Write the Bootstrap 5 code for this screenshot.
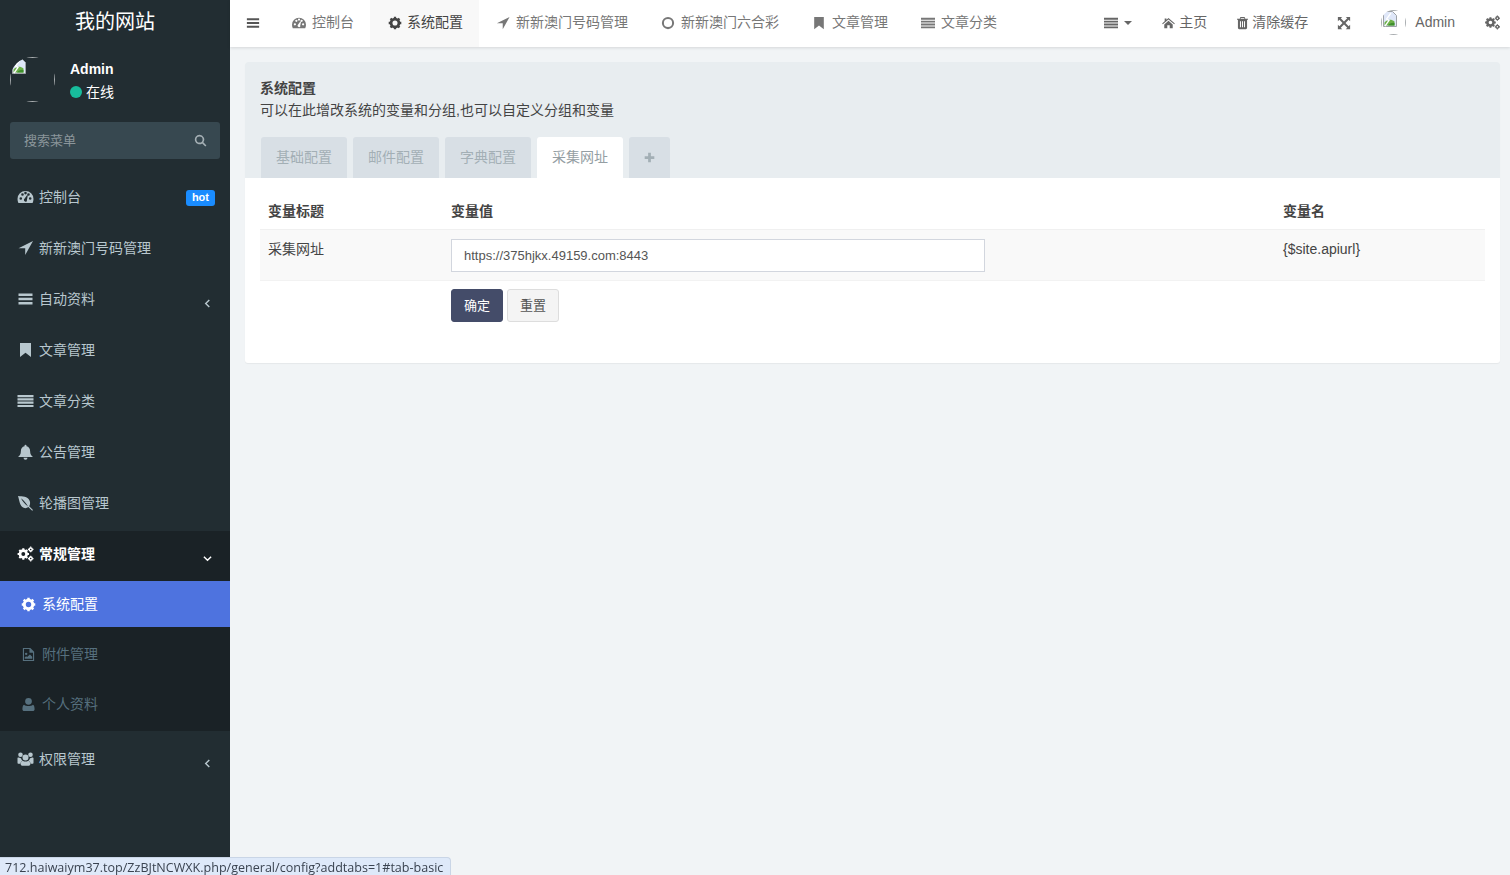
<!DOCTYPE html>
<html lang="zh-CN">
<head>
  <meta charset="UTF-8" />
  <meta name="viewport" content="width=device-width, initial-scale=1.0"/>
  <title>系统配置</title>
  <link href="https://cdn.jsdelivr.net/npm/bootstrap@5.3.2/dist/css/bootstrap.min.css" rel="stylesheet"/>
  <style>
    html, body { height: 100%; overflow: hidden; }
    body {
      background: #f1f4f6;
      color: #444c55;
      font-family: "Liberation Sans", "Noto Sans CJK SC", sans-serif;
      font-size: 14px;
    }
    .ico { width: 14px; height: 14px; fill: currentColor; flex: none; }

    /* sidebar */
    .side-wrap { width: 230px; height: 875px; background: #222d32; flex: none; }
    .side-logo { height: 44px; font-size: 20px; line-height: 44px; color: #fff; text-align: center; }
    .side-user { height: 78px; padding: 13px 10px 0; color: #fff; }
    .side-user-name { font-weight: 700; line-height: 22px; margin-top: 1px; }
    .side-user-state { line-height: 22px; margin-top: 1px; }
    .state-dot { width: 12px; height: 12px; border-radius: 50%; background: #18bc9c; }
    .broken-pic { display: block; position: relative; border-radius: 50%; overflow: hidden; flex: none; }
    .broken-pic::before { content: ""; position: absolute; inset: 0; border: 1px solid #a9adb0; }
    .broken-pic svg { position: absolute; left: 1px; top: 1px; width: 16px; height: 16px; }
    .pic-lg { width: 45px; height: 45px; margin-right: 15px; }
    .pic-sm { width: 25px; height: 25px; margin-right: 9px; }
    .side-search { height: 37px; margin: 0 10px 15px; padding: 0 14px; background: #374850; border-radius: 3px; color: #8b969b; font-size: 13px; }
    .side-search .ico { color: #a4afb4; width: 13px; height: 13px; margin-right: -1px; }
    .side-item { height: 51px; padding: 13px 15px 0 17px; color: #b8c7ce; line-height: 20px; }
    .side-item .ico { margin: 2px 5px 0 0; width: 17px; height: 16px; }
    .side-item .arrow-l { margin: 10px 3px 0 auto; width: 9px; height: 9px; fill: none; stroke: currentColor; stroke-width: 1.6; }
    .side-hot { margin-left: auto; background: #1a8cff; color: #fff; font-size: 11px; font-weight: 700; line-height: 15px; padding: 0 6px; border-radius: 3px; margin-top: 3px; height: 16px; }
    .side-group { background: #1a2226; height: 200px; }
    .side-group .side-item { color: #fff; height: 50px; }
    .side-last { padding-top: 18px; }
    .side-sub { height: 46px; margin-bottom: 4px; padding-left: 21px; color: #56707e; }
    .side-sub .ico { margin-right: 6px; width: 15px; height: 15px; }
    .side-sub-on { background: #4e73df; color: #fff; }

    /* top bar */
    .top-bar { height: 47px; background: #fff; box-shadow: 0 1px 3px rgba(0, 0, 0, .12); color: #777; position: relative; }
    .top-link { height: 47px; padding: 0 16px 2px 17px; white-space: nowrap; color: inherit; text-decoration: none; }
    .top-link .ico { margin-right: 6px; }
    .top-link-on { background: #f8f8f8; color: #444; padding: 0 16px 2px 18px; }
    .top-link-on .ico { margin-right: 5px; }
    .top-burger { width: 45px; justify-content: center; padding: 0 0 2px; color: #555; }
    .top-burger .ico { margin: 0; }
    .top-right { padding: 0 15px 2px; color: #666; }
    .top-right .ico { margin: 0; }
    .top-right .ico-gap { margin-right: 4px; }
    .top-right .ico-home { width: 13px; }
    .top-right .ico-trash { width: 11px; }
    .top-right .ico-cogs { width: 15px; height: 15px; }
    .top-expand { padding-left: 14px; }
    .top-end { padding-right: 10px; }
    .caret-mini { width: 0; height: 0; border: 4px solid transparent; border-top-color: #666; border-bottom: 0; margin-left: 6px; }

    /* panel */
    .page-body { padding: 15px 10px 0 15px; }
    .cfg-panel { background: #fff; border-radius: 3px; height: 301px; box-shadow: 0 1px 1px rgba(0, 0, 0, .05); overflow: hidden; }
    .cfg-head { background: #e8edf0; height: 116px; padding: 15px 15px 0; color: #444; line-height: 22px; }
    .cfg-title { font-weight: 700; }
    .cfg-tabs { gap: 6px; margin: 16px 0 0 1px; }
    .cfg-tab { height: 41px; padding: 0 15px; background: #d8dfe5; color: #a3afb5; border-radius: 3px 3px 0 0; line-height: 41px; text-decoration: none; }
    .cfg-tab-on { background: #fff; color: #949ea3; }
    .cfg-tab .ico { width: 11px; height: 11px; fill: #a3afb5; }
    .cfg-tab-add { width: 41px; padding: 0; }
    .cfg-body { padding: 15px 15px 0; }
    .cfg-grid { table-layout: fixed; width: 1225px; margin: 0; color: #444; }
    .cfg-grid th, .cfg-grid td { padding: 8px; border: 0; line-height: 20px; background: transparent; box-shadow: none; }
    .cfg-grid th { border-bottom: 1px solid #f0f0f0; }
    .cfg-c1 { width: 183px; }
    .cfg-c2 { width: 832px; }
    .cfg-c3 { width: 210px; }
    .cfg-row td { background: #f9f9f9; height: 51px; border-bottom: 1px solid #f2f2f2; padding-top: 9px; }
    .cfg-input { width: 534px; height: 33px; border: 1px solid #d2d6de; border-radius: 0; padding: 6px 12px; font-size: 13px; color: #555; line-height: 20px; }
    .cfg-ok, .cfg-reset { height: 33px; width: 52px; padding: 0; font-size: 13px; border-radius: 3px; line-height: 31px; }
    .cfg-ok { background: #444c69; border: 1px solid #444c69; color: #fff; }
    .cfg-reset { background: #f4f4f4; border: 1px solid #ddd; color: #555; }

    .url-tip {
      position: fixed; left: 0; bottom: 0; height: 18px; width: 451px; padding-left: 5px;
      background: #dee9f9; border: 1px solid #c9d5e6; border-width: 1px 1px 0 0; border-radius: 0 4px 0 0;
      font-family: "Open Sans", sans-serif; font-size: 12.550px; line-height: 19px; color: #3a4350; white-space: nowrap;
    }
  </style>
</head>
<body>
  <!-- icon set -->
  <svg width="0" height="0" class="position-absolute">
    <symbol id="i-dash" viewBox="0 0 16 16"><path fill-rule="evenodd" d="M8 2a8 8 0 0 0-8 8c0 1.500.3 2.800.9 4h14.200c.6-1.200.9-2.500.9-4a8 8 0 0 0-8-8zM3.300 10.800a1.300 1.300 0 1 1 0-2.600 1.300 1.300 0 0 1 0 2.600zM5 6.800a1.300 1.300 0 1 1 0-2.600 1.300 1.300 0 0 1 0 2.600zm3-1.400a1.300 1.300 0 1 1 0-2.600 1.300 1.300 0 0 1 0 2.600zM9.600 12a1.800 1.800 0 0 1-3.200-1.400L9.500 6.200l.8.300-1 5zM11 6.800a1.300 1.300 0 1 1 0-2.600 1.300 1.300 0 0 1 0 2.600zm1.700 4a1.300 1.300 0 1 1 0-2.600 1.300 1.300 0 0 1 0 2.600z"/></symbol>
    <symbol id="i-arrow" viewBox="0 0 16 16"><path d="M15.500 1 1 8.300h6.700V15z"/></symbol>
    <symbol id="i-bars" viewBox="0 0 16 16"><path d="M1 2.500h14v2.400H1zM1 6.800h14v2.400H1zM1 11.100h14v2.400H1z"/></symbol>
    <symbol id="i-book" viewBox="0 0 16 16"><path d="M2.500 1h11v14L8 10.800 2.500 15z"/></symbol>
    <symbol id="i-list" viewBox="0 0 16 16"><path d="M0 2h16v2.200H0zM0 5.300h16v2.200H0zM0 8.600h16v2.200H0zM0 11.900h16v2.200H0z"/></symbol>
    <symbol id="i-bell" viewBox="0 0 16 16"><path d="M8 .8a1 1 0 0 1 1 1v.5c2.300.5 3.600 2.400 3.600 4.700 0 3.500 1.300 4.800 2.900 6H.5c1.600-1.200 2.900-2.500 2.900-6 0-2.300 1.300-4.200 3.600-4.700v-.5a1 1 0 0 1 1-1zM6 13.700h4a2 2 0 0 1-4 0z"/></symbol>
    <symbol id="i-leaf" viewBox="0 0 16 16"><path fill-rule="evenodd" d="M.5 1c4.500.5 9.500.3 11.500 4.500 1 2 .7 4.200-.3 5.800l3.800 3.700-.8.800-3.800-3.700C9 13.500 6.500 13.500 4.800 12 2 9.500 1.800 5 .5 1zm3 2.300c1.500 3 3.700 5.500 7 8.200-2-3.300-4-5.800-7-8.200z"/></symbol>
    <symbol id="i-cog" viewBox="0 0 16 16"><circle cx="8" cy="8" r="4.500" fill="none" stroke="currentColor" stroke-width="3.200"/><path stroke="currentColor" stroke-width="2.600" d="M8 .8v3M8 12.200v3M.8 8h3M12.200 8h3M2.900 2.900l2.100 2.100M11 11l2.100 2.100M2.900 13.100 5 11M11 5l2.100-2.100"/></symbol>
    <symbol id="i-cogs" viewBox="0 0 16 16"><circle cx="5.800" cy="8" r="3.300" fill="none" stroke="currentColor" stroke-width="2.700"/><path stroke="currentColor" stroke-width="2.100" d="M5.800 2.300v2.500M5.800 11.200v2.500M.1 8h2.500M9 8h2.500M1.800 4l1.800 1.800M8 10.200 9.800 12M1.800 12l1.800-1.800M8 5.800 9.800 4"/><circle cx="13.200" cy="3.400" r="1.500" fill="none" stroke="currentColor" stroke-width="1.500"/><path stroke="currentColor" stroke-width="1.200" d="M13.200.6v1.200M13.200 5v1.200M10.400 3.400h1.200M14.800 3.400H16"/><circle cx="13.200" cy="12.600" r="1.500" fill="none" stroke="currentColor" stroke-width="1.500"/><path stroke="currentColor" stroke-width="1.200" d="M13.200 9.800V11M13.200 14.200v1.200M10.400 12.600h1.200M14.800 12.600H16"/></symbol>
    <symbol id="i-file" viewBox="0 0 16 16"><path fill-rule="evenodd" d="M2 1h8l4 4v10H2zm1.200 1.200v11.600h9.600V6H9V2.200zM5.500 6a1.300 1.300 0 1 1 0 2.600A1.300 1.300 0 0 1 5.500 6zM4 12.500v-1.500l1.500-1.200 1 .8L9.500 8l2.500 2.300v2.200z"/></symbol>
    <symbol id="i-user" viewBox="0 0 16 16"><path d="M8 1a3.600 3.600 0 1 1 0 7.200A3.600 3.600 0 0 1 8 1zM3.300 8.200c1.200 1.100 2.900 1.500 4.700 1.500s3.500-.4 4.700-1.500c1.300.6 1.800 2.400 1.800 4.800 0 1.200-.8 2-1.900 2H3.400c-1.100 0-1.900-.8-1.900-2 0-2.400.5-4.200 1.800-4.800z"/></symbol>
    <symbol id="i-users" viewBox="0 0 16 16"><path d="M8 3.500a3 3 0 1 1 0 6 3 3 0 0 1 0-6zM3 1.500a2.300 2.300 0 1 1 0 4.600 2.300 2.300 0 0 1 0-4.600zm10 0a2.300 2.300 0 1 1 0 4.600 2.300 2.300 0 0 1 0-4.600zM0 7c0-.4 1-.6 1.500-.5.500.5 1.200.8 2 .8.300 1.100.8 2 1.500 2.500-1.200.4-1.900 1.500-2.100 2.900H1c-.7 0-1-.5-1-1.300zm16 0c0-.4-1-.6-1.500-.5-.5.5-1.200.8-2 .8-.3 1.100-.8 2-1.500 2.500 1.200.4 1.900 1.500 2.100 2.900H15c.7 0 1-.5 1-1.300zM5.300 9.700c.7.600 1.700.9 2.700.9s2-.3 2.700-.9c1.400.3 2.100 1.800 2.100 3.600 0 .9-.6 1.400-1.500 1.400H4.700c-.9 0-1.500-.5-1.500-1.400 0-1.800.7-3.300 2.100-3.600z"/></symbol>
    <symbol id="i-home" viewBox="0 0 16 16"><path d="M8 1.800 15.800 8.500l-.8 1L8 3.600 1 9.500l-.8-1L3.300 5.800V2.500h2.200v1.400zM2.800 9.800 8 5.300l5.200 4.500V14.500H9.500v-3.700h-3v3.700H2.800z"/></symbol>
    <symbol id="i-trash" viewBox="0 0 13 16"><path fill-rule="evenodd" d="M4 1h5l.8 2h3.200v1.300h-1.100V14a1.400 1.400 0 0 1-1.400 1.300H2.500A1.400 1.400 0 0 1 1.100 14V4.300H0V3h3.200zm.5 1.100L4.300 3h4.400l-.2-.9zM3.500 6v7h1.200V6zm2.400 0v7h1.200V6zm2.400 0v7h1.200V6z"/></symbol>
    <symbol id="i-expand" viewBox="0 0 16 16"><path d="M1 1h5L4.300 2.700 8 6.300l3.700-3.600L10 1h5v5l-1.700-1.700L9.700 8l3.600 3.700L15 10v5h-5l1.700-1.700L8 9.700l-3.700 3.600L6 15H1v-5l1.700 1.700L6.300 8 2.700 4.300 1 6z"/></symbol>
    <symbol id="i-ring" viewBox="0 0 16 16"><path fill-rule="evenodd" d="M8 1a7 7 0 1 1 0 14A7 7 0 0 1 8 1zm0 2.300a4.700 4.700 0 1 0 0 9.400 4.700 4.700 0 0 0 0-9.400z"/></symbol>
    <symbol id="i-search" viewBox="0 0 16 16"><path fill-rule="evenodd" d="M6.800 1a5.800 5.800 0 0 1 4.700 9.200l3.800 3.800-1.400 1.400-3.800-3.800A5.800 5.800 0 1 1 6.800 1zm0 2a3.800 3.800 0 1 0 0 7.600 3.800 3.800 0 0 0 0-7.600z"/></symbol>
    <symbol id="i-plus" viewBox="0 0 16 16"><path d="M6 1h4v5h5v4h-5v5H6v-5H1V6h5z"/></symbol>
    <symbol id="i-broken" viewBox="0 0 16 16"><path d="M1.500.5h9l4 4v11h-13z" fill="#dfe7f8" stroke="#9ea2a6"/><path d="M2.500 14.500v-3c3-3.500 7-3.500 10-1v4z" fill="#6db048"/><path d="M6 14.500c1.500-2 4-3 6.500-2.500v2.500z" fill="#3f8f2c"/><path d="M9 2 4.500 8 7 9.500 3 15" fill="none" stroke="#fff" stroke-width="1.300"/></symbol>
    <symbol id="i-left" viewBox="0 0 10 10"><path d="M7 1 3 5l4 4"/></symbol>
    <symbol id="i-down" viewBox="0 0 10 10"><path d="M1 3l4 4 4-4"/></symbol>
  </svg>

  <div class="d-flex">
    <!-- sidebar -->
    <aside class="side-wrap">
      <div class="side-logo">我的网站</div>
      <div class="side-user d-flex">
        <span class="broken-pic pic-lg"><svg><use href="#i-broken"/></svg></span>
        <div>
          <div class="side-user-name">Admin</div>
          <div class="side-user-state d-flex align-items-center gap-1"><span class="state-dot"></span>在线</div>
        </div>
      </div>
      <div class="side-search d-flex align-items-center justify-content-between">
        <span>搜索菜单</span>
        <svg class="ico"><use href="#i-search"/></svg>
      </div>
      <div class="side-item d-flex"><svg class="ico"><use href="#i-dash"/></svg>控制台<span class="side-hot">hot</span></div>
      <div class="side-item d-flex"><svg class="ico"><use href="#i-arrow"/></svg>新新澳门号码管理</div>
      <div class="side-item d-flex"><svg class="ico"><use href="#i-bars"/></svg>自动资料<svg class="arrow-l"><use href="#i-left"/></svg></div>
      <div class="side-item d-flex"><svg class="ico"><use href="#i-book"/></svg>文章管理</div>
      <div class="side-item d-flex"><svg class="ico"><use href="#i-list"/></svg>文章分类</div>
      <div class="side-item d-flex"><svg class="ico"><use href="#i-bell"/></svg>公告管理</div>
      <div class="side-item d-flex"><svg class="ico"><use href="#i-leaf"/></svg>轮播图管理</div>
      <div class="side-group">
        <div class="side-item d-flex fw-bold"><svg class="ico"><use href="#i-cogs"/></svg>常规管理<svg class="arrow-l"><use href="#i-down"/></svg></div>
        <div class="side-sub side-sub-on d-flex align-items-center"><svg class="ico"><use href="#i-cog"/></svg>系统配置</div>
        <div class="side-sub d-flex align-items-center"><svg class="ico"><use href="#i-file"/></svg>附件管理</div>
        <div class="side-sub d-flex align-items-center"><svg class="ico"><use href="#i-user"/></svg>个人资料</div>
      </div>
      <div class="side-item side-last d-flex"><svg class="ico"><use href="#i-users"/></svg>权限管理<svg class="arrow-l"><use href="#i-left"/></svg></div>
    </aside>

    <div class="flex-grow-1">
      <!-- top bar -->
      <nav class="top-bar d-flex align-items-center">
        <a class="top-link top-burger d-flex align-items-center" href="#"><svg class="ico"><use href="#i-bars"/></svg></a>
        <a class="top-link d-flex align-items-center" href="#"><svg class="ico"><use href="#i-dash"/></svg>控制台</a>
        <a class="top-link top-link-on d-flex align-items-center" href="#"><svg class="ico"><use href="#i-cog"/></svg>系统配置</a>
        <a class="top-link d-flex align-items-center" href="#"><svg class="ico"><use href="#i-arrow"/></svg>新新澳门号码管理</a>
        <a class="top-link d-flex align-items-center" href="#"><svg class="ico"><use href="#i-ring"/></svg>新新澳门六合彩</a>
        <a class="top-link d-flex align-items-center" href="#"><svg class="ico"><use href="#i-book"/></svg>文章管理</a>
        <a class="top-link d-flex align-items-center" href="#"><svg class="ico"><use href="#i-list"/></svg>文章分类</a>
        <div class="ms-auto d-flex align-items-center">
          <a class="top-link top-right d-flex align-items-center" href="#"><svg class="ico"><use href="#i-list"/></svg><span class="caret-mini"></span></a>
          <a class="top-link top-right d-flex align-items-center" href="#"><svg class="ico ico-gap ico-home"><use href="#i-home"/></svg>主页</a>
          <a class="top-link top-right d-flex align-items-center" href="#"><svg class="ico ico-gap ico-trash"><use href="#i-trash"/></svg>清除缓存</a>
          <a class="top-link top-right top-expand d-flex align-items-center" href="#"><svg class="ico"><use href="#i-expand"/></svg></a>
          <a class="top-link top-right d-flex align-items-center" href="#"><span class="broken-pic pic-sm"><svg><use href="#i-broken"/></svg></span>Admin</a>
          <a class="top-link top-right top-end d-flex align-items-center" href="#"><svg class="ico ico-cogs"><use href="#i-cogs"/></svg></a>
        </div>
      </nav>

      <!-- config panel -->
      <main class="page-body">
        <section class="cfg-panel">
          <div class="cfg-head">
            <div class="cfg-title">系统配置</div>
            <div>可以在此增改系统的变量和分组,也可以自定义分组和变量</div>
            <div class="cfg-tabs d-flex">
              <a class="cfg-tab" href="#">基础配置</a>
              <a class="cfg-tab" href="#">邮件配置</a>
              <a class="cfg-tab" href="#">字典配置</a>
              <a class="cfg-tab cfg-tab-on" href="#">采集网址</a>
              <a class="cfg-tab cfg-tab-add d-flex align-items-center justify-content-center" href="#"><svg class="ico"><use href="#i-plus"/></svg></a>
            </div>
          </div>
          <div class="cfg-body">
            <table class="table cfg-grid">
              <colgroup>
                <col class="cfg-c1"><col class="cfg-c2"><col class="cfg-c3">
              </colgroup>
              <thead>
                <tr><th>变量标题</th><th>变量值</th><th>变量名</th></tr>
              </thead>
              <tbody>
                <tr class="cfg-row">
                  <td>采集网址</td>
                  <td><input class="form-control cfg-input" type="text" value="https://375hjkx.49159.com:8443"></td>
                  <td>{$site.apiurl}</td>
                </tr>
                <tr>
                  <td></td>
                  <td class="d-flex gap-1">
                    <button class="btn cfg-ok" type="button">确定</button>
                    <button class="btn cfg-reset" type="button">重置</button>
                  </td>
                  <td></td>
                </tr>
              </tbody>
            </table>
          </div>
        </section>
      </main>
    </div>
  </div>

  <div class="url-tip">712.haiwaiym37.top/ZzBJtNCWXK.php/general/config?addtabs=1#tab-basic</div>
</body>
</html>
